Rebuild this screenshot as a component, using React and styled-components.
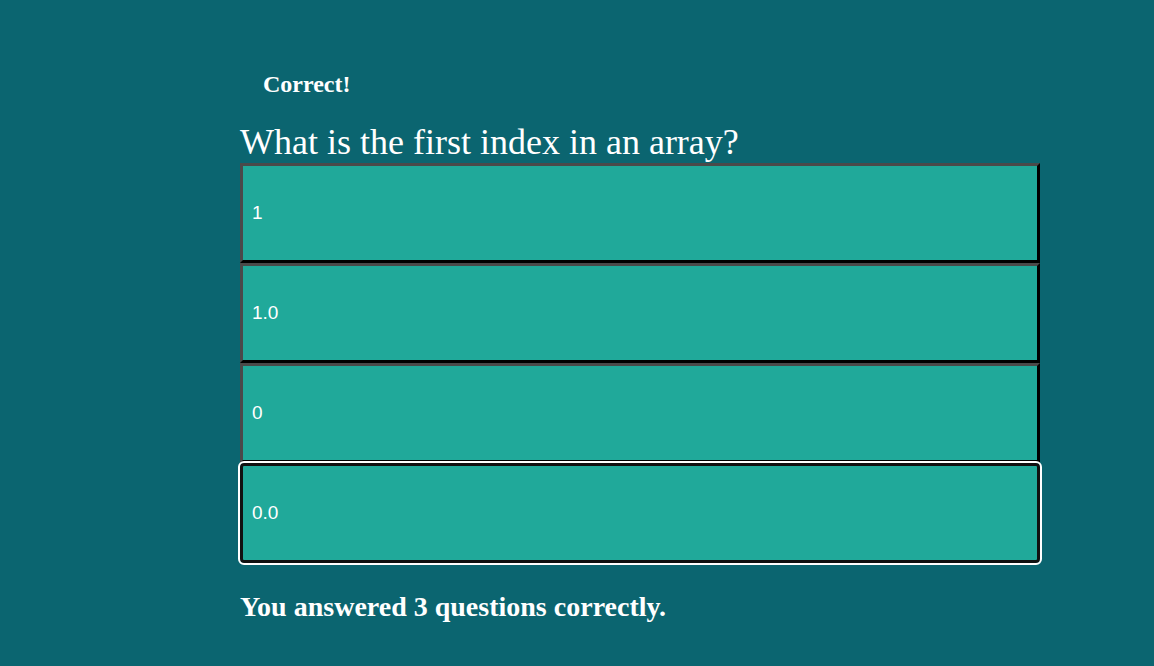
import React from "react";
import styled, { createGlobalStyle } from "styled-components";

const Global = createGlobalStyle`
  html, body { margin: 0; padding: 0; background: #0b6570; }
  body { font-family: "Liberation Serif", "Times New Roman", serif; color: #fff; }
`;

const Page = styled.main`
  min-height: 666px;
  box-sizing: border-box;
  padding: 66px 0 0 240px;
`;

const Quiz = styled.section`
  width: 800px;
  display: flex;
  flex-direction: column;
`;

const Feedback = styled.div`
  font-size: 24px;
  font-weight: bold;
  padding-left: 23px;
  line-height: 36px;
  height: 36px;
`;

const Question = styled.h2`
  margin: 18px 0 0;
  font-size: 36px;
  font-weight: normal;
  line-height: 44px;
  height: 43px;
`;

const Options = styled.div`
  display: flex;
  flex-direction: column;
`;

const Option = styled.button`
  box-sizing: border-box;
  width: 800px;
  height: 100px;
  background: #20a99a;
  color: #fff;
  font-family: "Liberation Sans", Arial, sans-serif;
  font-size: 19px;
  text-align: left;
  padding: 0 9px;
  border: 3px solid;
  border-color: #4a4a4a #000 #000 #4a4a4a;
  border-radius: 0;
  cursor: pointer;
  ${(p) =>
    p.$focused &&
    `
    border: 3px solid #111;
    border-radius: 4px;
    outline: 2px solid #fff;
    outline-offset: 0;
  `}
`;

const Score = styled.p`
  margin: 26px 0 0;
  font-size: 28px;
  font-weight: bold;
  line-height: 36px;
`;

export default function App() {
  const options = ["1", "1.0", "0", "0.0"];
  return (
    <>
      <Global />
      <Page>
        <Quiz>
          <Feedback>Correct!</Feedback>
          <Question>What is the first index in an array?</Question>
          <Options>
            {options.map((o, i) => (
              <Option key={o} $focused={i === 3}>
                {o}
              </Option>
            ))}
          </Options>
          <Score>You answered 3 questions correctly.</Score>
        </Quiz>
      </Page>
    </>
  );
}
